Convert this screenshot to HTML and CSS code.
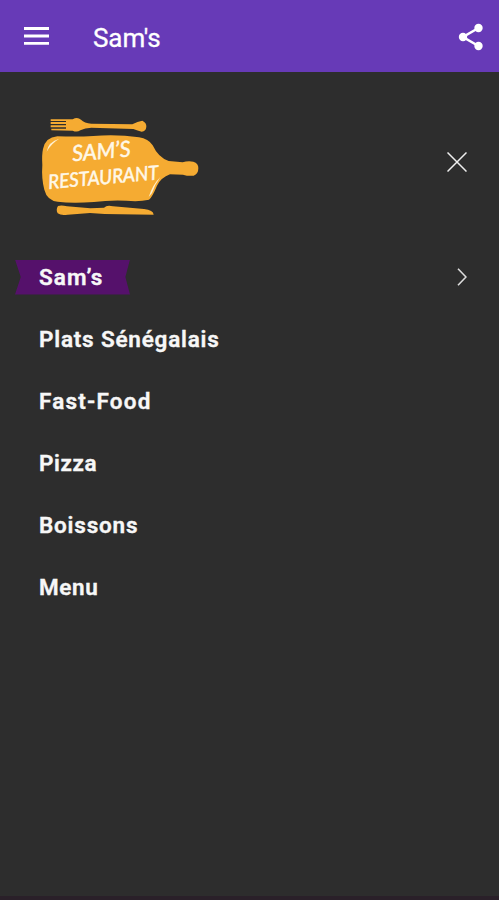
FILE: index.html
```html
<!DOCTYPE html>
<html lang="fr">
<head>
<meta charset="utf-8">
<title>Sam's</title>
<link rel="stylesheet" href="styles.css">
</head>
<body>
<header class="appbar">
  <svg class="burger" viewBox="0 0 25 18"><path d="M0 1.5h25M0 9h25M0 16.3h25"/></svg>
  <h1>Sam's</h1>
  <svg class="share" viewBox="0 0 26 28"><path d="M20.5 5L5 14l15.500 9"/><circle cx="20.500" cy="5" r="4.200"/><circle cx="5" cy="14" r="4.200"/><circle cx="20.500" cy="23" r="4.200"/></svg>
</header>
<main class="drawer">
  <div class="brand">
    <svg class="logo" viewBox="0 0 540 360">
      <g class="gold">
        <path d="M62 43L128 43Q142 35 153 44Q163 54 184 56L307 58Q323 49 337 47Q350 53 349 65Q348 79 335 80Q323 77 310 72L184 68Q165 68 151 76Q141 83 128 77L64 76L64 71L108 71L108 67L62 67L62 61L108 61L108 57L62 57L62 51L108 51L108 48L62 48Z"/>
        <path d="M39 132Q46 97 82 94Q145 96 190 93Q260 87 327 97Q355 101 368 121Q385 158 416 168L458 172Q473 167 490 170Q506 175 505 190Q505 207 491 212Q475 214 459 209L420 208Q393 218 381 242Q367 276 357 284Q327 291 289 287Q235 285 192 291Q124 296 83 290Q51 286 43 254Q34 220 37 180Q35 150 39 132Z"/>
        <path d="M84 303Q94 300 111 304L181 310L222 308Q231 299 249 304L342 312Q370 315 371 329L224 327L180 324L113 329Q94 333 83 325Q77 314 84 303Z"/>
      </g>
      <path class="shine" d="M50 140Q55 110 88 101Q64 115 50 140ZM356 276Q369 237 391 216Q374 239 366 264Z"/>
      <g class="script" transform="rotate(-5 210 185)">
        <text x="130" y="162" font-size="66" textLength="176" lengthAdjust="spacingAndGlyphs">SAM’S</text>
        <text x="51" y="238" font-size="59" textLength="332" lengthAdjust="spacingAndGlyphs">RESTAURANT</text>
      </g>
    </svg>
    <svg class="close" viewBox="0 0 20 20"><path d="M.5.500l19 19M19.500.500l-19 19"/></svg>
  </div>
  <nav>
    <div class="row"><a class="active">Sam’s</a><svg class="chevron" viewBox="0 0 10 18"><path d="M1 .7L9 9L1 17.300"/></svg></div>
    <div class="row"><a>Plats Sénégalais</a></div>
    <div class="row"><a class="wide">Fast-Food</a></div>
    <div class="row"><a class="snug">Pizza</a></div>
    <div class="row"><a>Boissons</a></div>
    <div class="row"><a class="snug">Menu</a></div>
  </nav>
</main>
</body>
</html>
```
FILE: styles.css
```css
* { box-sizing: border-box; }
body {
  margin: 0;
  height: 900px;
  display: flex;
  flex-direction: column;
  background: #2d2d2d;
  color: #f7f7f7;
  font-family: Roboto, sans-serif;
  overflow: hidden;
}
.appbar {
  height: 72px;
  flex: none;
  display: flex;
  align-items: center;
  padding: 0 15px 0 24px;
  background: #673ab7;
}
.burger { width: 25px; height: 18px; fill: none; stroke: #fff; stroke-width: 2.8; }
.appbar h1 {
  margin: 4px auto 0 44px;
  font-size: 26px;
  line-height: 32px;
  font-weight: 400;
  letter-spacing: -.1px;
  -webkit-text-stroke: .3px #fff;
  color: #fff;
}
.share { width: 26px; height: 28px; margin-top: 2px; fill: #fff; stroke: #fff; stroke-width: 2.600; }
.share path { fill: none; }
.share circle { stroke: none; }
.drawer { flex: 1; border-bottom: 4px solid #2a2029; }
.brand {
  height: 174px;
  display: flex;
  align-items: flex-start;
  justify-content: space-between;
  padding: 33px 32px 0 30px;
}
.logo { width: 180px; height: 120px; }
.gold { fill: #f5ab32; }
.shine { fill: #fff0cf; }
.script {
  fill: #fff8e8;
  stroke: #fff8e8;
  stroke-width: 1.500;
  font-family: Lato, sans-serif;
  font-style: italic;
  font-weight: 400;
}
.close { width: 20px; height: 20px; margin-top: 47px; fill: none; stroke: #eee; stroke-width: 1.500; }
.row {
  height: 62px;
  display: flex;
  align-items: center;
  justify-content: space-between;
  padding: 0 32px 0 15px;
}
.row a {
  height: 35px;
  line-height: 34px;
  padding-left: 24px;
  font-size: 22.500px;
  font-weight: 600;
  letter-spacing: .800px;
  -webkit-text-stroke: .4px #f7f7f7;
  white-space: nowrap;
}
.row .wide { letter-spacing: 1.200px; }
.row .snug { letter-spacing: .600px; }
.row .active {
  width: 115px;
  letter-spacing: 1.100px;
  background: #55116b;
  clip-path: polygon(0 0, 100% 0, 96% 50%, 100% 100%, 0 100%, 5% 50%);
}
.chevron { width: 10px; height: 18px; fill: none; stroke: #ddd; stroke-width: 1.600; }
```
